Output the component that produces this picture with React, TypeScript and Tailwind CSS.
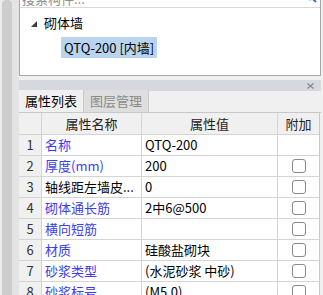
import React from "react";

const rows = [
  { n: 1, name: "名称", value: "QTQ-200", blue: true, check: false },
  { n: 2, name: "厚度(mm)", value: "200", blue: true, check: true },
  { n: 3, name: "轴线距左墙皮...", value: "0", blue: false, check: true },
  { n: 4, name: "砌体通长筋", value: "2中6@500", blue: true, check: true },
  { n: 5, name: "横向短筋", value: "", blue: true, check: true },
  { n: 6, name: "材质", value: "硅酸盐砌块", blue: true, check: true },
  { n: 7, name: "砂浆类型", value: "(水泥砂浆 中砂)", blue: true, check: true },
  { n: 8, name: "砂浆标号", value: "(M5.0)", blue: true, check: true },
];

function Check() {
  return <div className="w-[14px] h-[14px] rounded-[3px] border border-[#8a8a8a] bg-white" />;
}

export default function App() {
  return (
    <div
      className="w-[323px] h-[295px] overflow-hidden bg-[#f0f0f0] flex text-[13px] text-black"
      style={{ fontFamily: '"Noto Sans CJK SC", "Liberation Sans", sans-serif' }}
    >
      {/* left scroll strip */}
      <div className="w-[19px] h-full flex shrink-0">
        <div className="w-[2px] bg-[#ececec]" />
        <div className="w-[10px] h-full bg-[#cdcdcd] rounded-t-[4px]" />
        <div className="w-[7px] bg-[#e4e4e4]" />
      </div>

      <div className="w-[302px] flex flex-col shrink-0">
        {/* top panel */}
        <div className="h-[76px] shrink-0 border-x border-b border-[#a8a8a8] bg-white flex flex-col">
          <div className="h-[8px] shrink-0 border-b border-[#d8d8d8] relative overflow-hidden">
            <span className="absolute left-[2px] top-[-9px] text-[13px] leading-[16px] text-[#8c8c8c]">
              搜索构件...
            </span>
            <svg className="absolute right-[3px] top-[-9px]" width="12" height="12" viewBox="0 0 12 12">
              <circle cx="5" cy="5" r="3.5" fill="none" stroke="#3b86d6" strokeWidth="1.6" />
              <path d="M7.5 7.5 L11 11" stroke="#2f75c8" strokeWidth="2" />
            </svg>
          </div>
          <div className="flex items-center h-[29px] shrink-0 pl-[11px]">
            <svg width="6" height="6" viewBox="0 0 6 6" className="mt-[2px]">
              <path d="M6 0 L6 6 L0 6 Z" fill="#3c3c3c" />
            </svg>
            <span className="ml-[7px] leading-[16px]">砌体墙</span>
          </div>
          <div className="pl-[41px] shrink-0">
            <span className="inline-block bg-[#b9d4f1] px-[3px] h-[21px] leading-[21px]">QTQ-200 [内墙]</span>
          </div>
        </div>

        <div className="h-[4px] shrink-0" />

        {/* bottom panel */}
        <div className="flex flex-col shrink-0">
          <div className="h-[11px] shrink-0 bg-[#d5d8dc] flex justify-end items-center pr-[7px]">
            <svg width="7" height="6" viewBox="0 0 7 6">
              <path d="M0.5 0.5 L6.5 5.5 M6.5 0.5 L0.5 5.5" stroke="#8a8a8a" strokeWidth="1.3" />
            </svg>
          </div>
          <div className="h-[22px] shrink-0 flex items-end bg-[#f0f0f0] border-b border-[#c8c8c8]">
            <div className="h-[22px] w-[65px] flex items-center justify-center bg-[#f0f0f0] border-r border-[#c8c8c8]">
              属性列表
            </div>
            <div className="h-[22px] w-[65px] flex items-center justify-center bg-[#dedede] text-[#8a8a8a] border-r border-[#c8c8c8]">
              图层管理
            </div>
          </div>

          <div className="border-r border-[#c8c8c8] w-[301px] shrink-0">
            <div className="grid grid-cols-[23px_100px_136px_41px] h-[22px] bg-[#f0f0f0] border-b border-[#d4d4d4] text-[#222]">
              <div className="border-r border-[#d4d4d4]" />
              <div className="border-r border-[#d4d4d4] flex items-center justify-center">属性名称</div>
              <div className="border-r border-[#d4d4d4] flex items-center justify-center">属性值</div>
              <div className="flex items-center justify-center">附加</div>
            </div>
            {rows.map((r) => (
              <div
                key={r.n}
                className="grid grid-cols-[23px_100px_136px_41px] h-[21px] border-b border-[#d4d4d4] bg-white"
              >
                <div className="border-r border-[#d4d4d4] bg-[#f0f0f0] flex items-center justify-center text-[#333]">
                  {r.n}
                </div>
                <div
                  className={`border-r border-[#d4d4d4] flex items-center pl-[3px] whitespace-nowrap overflow-hidden ${
                    r.blue ? "text-[#3b3bf2]" : "text-black"
                  }`}
                >
                  {r.name}
                </div>
                <div className="border-r border-[#d4d4d4] flex items-center pl-[3px] whitespace-nowrap">
                  {r.value}
                </div>
                <div className="flex items-center justify-center">{r.check && <Check />}</div>
              </div>
            ))}
          </div>
        </div>
      </div>
    </div>
  );
}
